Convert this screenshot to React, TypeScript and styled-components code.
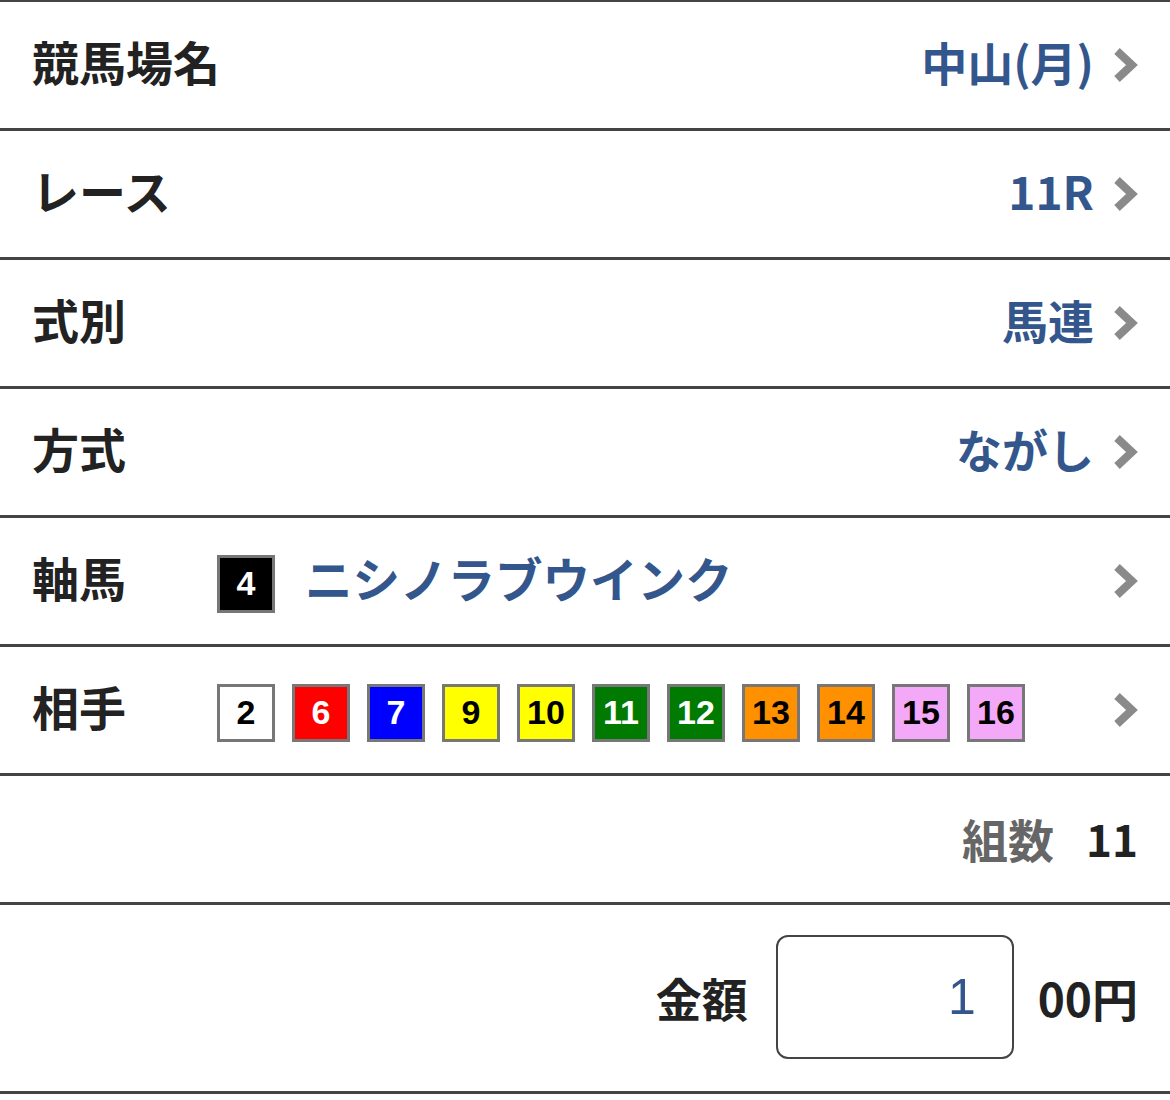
import React from "react";
import styled, { createGlobalStyle } from "styled-components";

const Global = createGlobalStyle`
  html, body { margin: 0; padding: 0; background: #fff; }
  body { font-family: "Noto Sans CJK JP", "Noto Sans", sans-serif; }
`;

const List = styled.div`
  width: 1170px;
  border-top: 2px solid #444;
`;

const Row = styled.div<{ $tall?: boolean }>`
  height: ${(p) => (p.$tall ? 186 : 126)}px;
  border-bottom: 3px solid #444;
  display: flex;
  align-items: center;
  padding: 0 32px 0 32px;
  box-sizing: content-box;
  width: calc(1170px - 64px);
`;

const Label = styled.div<{ $w?: number }>`
  font-size: 47px;
  font-weight: 700;
  color: #222;
  width: ${(p) => (p.$w ? `${p.$w}px` : "auto")};
  flex-shrink: 0;
  line-height: 1;
  margin-top: -9px;
`;

const Value = styled.div`
  margin-left: auto;
  font-size: 46px;
  font-weight: 700;
  color: #33568c;
  line-height: 1;
  margin-top: -9px;
`;

const Chevron = styled.svg`
  width: 26px;
  height: 36px;
  margin-left: 19px;
  margin-right: -1px;
  flex-shrink: 0;
`;

const Arrow = () => (
  <Chevron viewBox="0 0 26 36">
    <polyline points="4,4 19,18 4,32" fill="none" stroke="#8a8a8a" strokeWidth="8" strokeLinejoin="miter" />
  </Chevron>
);

const Badges = styled.div`
  display: flex;
  gap: 17px;
  align-items: center;
  flex: 1;
  margin-top: 5px;
`;

const Badge = styled.div<{ $bg: string; $fg: string }>`
  width: 58px;
  height: 58px;
  box-sizing: border-box;
  border: 3px solid #777;
  background: ${(p) => p.$bg};
  color: ${(p) => p.$fg};
  display: flex;
  align-items: center;
  justify-content: center;
  font-family: "Liberation Sans", Arial, sans-serif;
  font-weight: 700;
  font-size: 34px;
  flex-shrink: 0;
`;

const HorseName = styled.div`
  margin-left: 13px;
  font-size: 47.5px;
  font-weight: 700;
  color: #33568c;
  line-height: 1;
  margin-top: -12px;
`;

const CountLabel = styled.span`
  font-size: 46px;
  font-weight: 700;
  color: #666;
`;

const CountNum = styled.span`
  font-size: 44px;
  font-weight: 700;
  color: #222;
  margin-left: 32px;
`;

const Right = styled.div`
  margin-left: auto;
  display: flex;
  align-items: center;
  line-height: 1;
  margin-top: -3px;
`;

const AmountBox = styled.div`
  width: 238px;
  height: 124px;
  box-sizing: border-box;
  border: 2px solid #444;
  border-radius: 12px;
  margin: 0 24px 0 28px;
  display: flex;
  align-items: center;
  justify-content: flex-end;
  padding-right: 36px;
  font-family: "Liberation Sans", Arial, sans-serif;
  font-size: 50px;
  color: #33568c;
`;

const Yen = styled.span`
  font-size: 46px;
  font-weight: 700;
  color: #222;
`;

const sakura = [
  { n: 2, bg: "#fff", fg: "#000" },
  { n: 6, bg: "#ff0000", fg: "#fff" },
  { n: 7, bg: "#0000ff", fg: "#fff" },
  { n: 9, bg: "#ffff00", fg: "#000" },
  { n: 10, bg: "#ffff00", fg: "#000" },
  { n: 11, bg: "#007a00", fg: "#fff" },
  { n: 12, bg: "#007a00", fg: "#fff" },
  { n: 13, bg: "#ff9000", fg: "#000" },
  { n: 14, bg: "#ff9000", fg: "#000" },
  { n: 15, bg: "#f4a9f8", fg: "#000" },
  { n: 16, bg: "#f4a9f8", fg: "#000" },
];

const SimpleRow = ({ label, value }: { label: string; value: string }) => (
  <Row>
    <Label>{label}</Label>
    <Value>{value}</Value>
    <Arrow />
  </Row>
);

export default function App() {
  return (
    <>
      <Global />
      <List>
        <SimpleRow label="競馬場名" value="中山(月)" />
        <SimpleRow label="レース" value="11R" />
        <SimpleRow label="式別" value="馬連" />
        <SimpleRow label="方式" value="ながし" />
        <Row>
          <Label $w={185}>軸馬</Label>
          <Badges>
            <Badge $bg="#000" $fg="#fff">4</Badge>
            <HorseName>ニシノラブウインク</HorseName>
          </Badges>
          <Arrow />
        </Row>
        <Row>
          <Label $w={185}>相手</Label>
          <Badges>
            {sakura.map((s) => (
              <Badge key={s.n} $bg={s.bg} $fg={s.fg}>
                {s.n}
              </Badge>
            ))}
          </Badges>
          <Arrow />
        </Row>
        <Row>
          <Right>
            <CountLabel>組数</CountLabel>
            <CountNum>11</CountNum>
          </Right>
        </Row>
        <Row $tall>
          <Right>
            <Yen>金額</Yen>
            <AmountBox>1</AmountBox>
            <Yen>00円</Yen>
          </Right>
        </Row>
      </List>
    </>
  );
}
